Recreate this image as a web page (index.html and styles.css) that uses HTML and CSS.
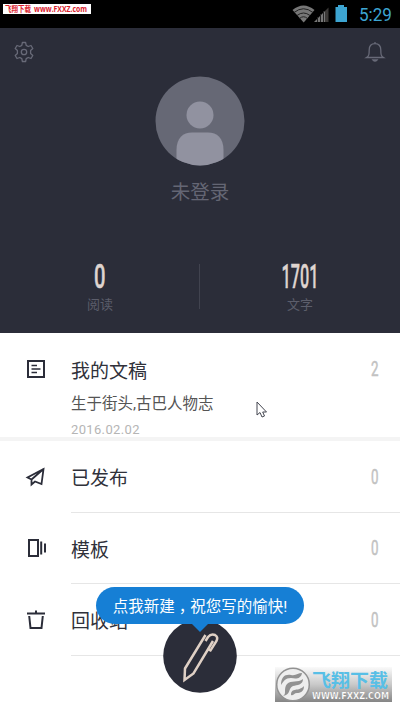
FILE: index.html
```html
<!DOCTYPE html>
<html lang="zh-CN">
<head>
<meta charset="utf-8">
<title>我的文稿</title>
<link rel="stylesheet" href="styles.css">
</head>
<body>
<div class="phone">
  <div class="status">
    <span class="site-tag"><svg width="84" height="12"><text x="0" y="9" textLength="26" lengthAdjust="spacingAndGlyphs">飞翔下载</text><text x="29" y="9" textLength="53" lengthAdjust="spacingAndGlyphs">www.FXXZ.com</text></svg></span>
    <div class="status-icons">
      <svg width="58" height="20" viewBox="292 4 58 20">
        <path d="M292.500 10Q303.500 1 314.500 10L303.700 22.500Z" fill="#777"/>
        <path d="M294 12.500Q303.500 5 313 12.500M297 15.500Q303.500 10.500 310 15.500M299.500 18.500Q303.500 15 307.500 18.500" fill="none" stroke="#222" stroke-width="1"/>
        <path d="M314 22L325 11V22Z" fill="#777"/><path d="M325 11L328.500 7.500V22H325Z" fill="#3c3a38"/>
        <path d="M317.500 17V22M320.500 14V22M323.500 11V22" stroke="#222" stroke-width="1"/>
        <path d="M335.500 7H338V5H344V7H347V22H335.500Z" fill="#3da5d2"/>
      </svg>
      <svg class="clock" width="36" height="22"><text x="1" y="16.500" textLength="33" lengthAdjust="spacingAndGlyphs">5:29</text></svg>
    </div>
  </div>
  <header class="profile">
    <div class="tools">
      <svg width="22" height="22" viewBox="0 0 22 22" fill="none" stroke="#686a78" stroke-width="1.300" stroke-linejoin="round">
        <path d="M9.400 1.500H12.600L13.200 4.400L15.200 5.500L18 4.500L19.800 7.500L17.600 9.500V12.500L19.800 14.500L18 17.500L15.200 16.500L13.200 17.600L12.600 20.500H9.400L8.800 17.600L6.800 16.500L4 17.500L2.200 14.500L4.400 12.500V9.500L2.200 7.500L4 4.500L6.800 5.500L8.800 4.400Z"/><circle cx="11" cy="11" r="2.700"/>
      </svg>
      <svg width="20" height="22" viewBox="0 0 20 22" fill="none" stroke="#686a78" stroke-width="1.300">
        <path d="M1.500 16.500C4 15 4.200 13.500 4.200 9C4.200 5 6.500 2.700 10 2.700S15.800 5 15.800 9C15.800 13.500 16 15 18.500 16.500ZM10 1V2.700M8 19Q10 21.200 12 19Z"/>
      </svg>
    </div>
    <svg class="avatar" width="90" height="90" viewBox="0 0 90 90">
      <defs><clipPath id="face"><circle cx="45" cy="45" r="44.500"/></clipPath></defs>
      <g clip-path="url(#face)"><path d="M0 0H90V90H0Z" fill="#666875"/><circle cx="45" cy="39" r="13.500" fill="#9192a0"/><path d="M21.500 92V74C21.500 62 28 56.500 37 56.500H53C62 56.500 68.500 62 68.500 74V92Z" fill="#9192a0"/></g>
    </svg>
    <div class="login">未登录</div>
    <div class="stats">
      <div class="stat"><svg width="60" height="38"><text x="24" y="25" textLength="11.500" lengthAdjust="spacingAndGlyphs">0</text></svg><span>阅读</span></div>
      <i class="divider"></i>
      <div class="stat"><svg width="60" height="38"><text x="11.500" y="25" textLength="37" lengthAdjust="spacingAndGlyphs">1701</text></svg><span>文字</span></div>
    </div>
  </header>
  <main>
    <section class="row drafts">
      <svg class="icon" width="22" height="22" viewBox="0 0 22 22" fill="none" stroke="#2b2d39" stroke-width="2"><path d="M3 3H19V19H3Z"/><path d="M6.500 7.500H12M6.500 11H15.500M6.500 14.500H12" stroke-width="1.500"/></svg>
      <div class="body"><h2>我的文稿</h2><p>生于街头,古巴人物志</p><time>2016.02.02</time></div>
      <svg class="count" width="10" height="24"><text x="1" y="18.500" textLength="7.500" lengthAdjust="spacingAndGlyphs">2</text></svg>
    </section>
    <section class="row">
      <svg class="icon" width="22" height="22" viewBox="0 0 22 22" fill="none" stroke="#2b2d39" stroke-width="1.800"><path d="M18.500 3L2.500 11.500L6.500 13.500V18.500L10 15.500L16.500 18ZM6.500 13.500L18.500 3"/></svg>
      <h2 class="body">已发布</h2>
      <svg class="count" width="10" height="24"><text x="1" y="18.500" textLength="7.500" lengthAdjust="spacingAndGlyphs">0</text></svg>
    </section>
    <section class="row">
      <svg class="icon" width="22" height="22" viewBox="0 0 22 22" fill="none" stroke="#2b2d39" stroke-width="2"><path d="M4 3H13V19H4ZM16.200 4.500V17.500M20 6.500V15.500"/></svg>
      <h2 class="body">模板</h2>
      <svg class="count" width="10" height="24"><text x="1" y="18.500" textLength="7.500" lengthAdjust="spacingAndGlyphs">0</text></svg>
    </section>
    <section class="row">
      <svg class="icon" width="22" height="22" viewBox="0 0 22 22" fill="none" stroke="#2b2d39" stroke-width="2"><path d="M2 4.500H20M11 1.500V4.500"/><path d="M4.200 7L5.500 19H16.500L17.800 7"/></svg>
      <h2 class="body">回收站</h2>
      <svg class="count" width="10" height="24"><text x="1" y="18.500" textLength="7.500" lengthAdjust="spacingAndGlyphs">0</text></svg>
    </section>
  </main>
  <svg class="fab" width="74" height="74" viewBox="0 0 74 74">
    <circle cx="37" cy="37" r="36.800" fill="#2b2d39"/>
    <g fill="none" stroke="#dfd0c5" stroke-width="2.500"><path d="M42.500 16L22 49.500L21.500 61L30.500 54.500L50 22"/><path d="M42.500 22L45 18Q48 14.500 52 16Q55.500 18 53.500 22L47.500 31.500L44.500 30"/></g>
  </svg>
  <div class="tip">点我新建<span class="comma" lang="zh-TW">，</span>祝您写的愉快!</div>
  <svg class="cursor" width="12" height="18" viewBox="0 0 12 18"><path d="M1 1V14L4 11.500L6 16L8.500 15L6.700 11H10.500Z" fill="#fff" stroke="#444650" stroke-width="1"/></svg>
  <div class="brand">
    <svg width="117" height="36" viewBox="0 0 117 36">
      <defs><linearGradient id="shade" x2="0" y2="1"><stop stop-color="#fafafa"/><stop offset=".5" stop-color="#c9c9c9"/><stop offset="1" stop-color="#858585"/></linearGradient></defs>
      <path d="M0 0H117V35H0Z" fill="url(#shade)"/>
      <circle cx="18" cy="17.500" r="16.300" fill="#eee" stroke="#929292" stroke-width="1.500"/>
      <path d="M6 18C6 10 10 7 16 8C21 9 23 6 27 6C26 12 21 12 16 11C10 11 9 14 6 18ZM8 29C12 27 8 22 12 17C16 13 23 16 28 12C28 18 22 18 18 19C13 21 16 28 8 29ZM16 28C16 20 24 25 29 19C29 25 25 26 22 26C19 26 19 29 16 28Z" fill="#929292"/>
      <text class="brand-name" x="37" y="20" textLength="76" lengthAdjust="spacingAndGlyphs">飞翔下载</text>
      <text class="brand-url" x="37" y="32" textLength="77" lengthAdjust="spacingAndGlyphs">WWW.FXXZ.COM</text>
    </svg>
  </div>
</div>
</body>
</html>
```
FILE: styles.css
```css
* { box-sizing: border-box; }
body { margin: 0; background: #fff; font-family: Roboto, "Noto Sans CJK SC", sans-serif; }
svg { display: block; flex: none; overflow: visible; }
h2, p { margin: 0; font-weight: 400; }
.phone { position: relative; width: 400px; height: 711px; overflow: hidden; }
.status { display: flex; justify-content: space-between; height: 28px; padding: 4px 6px 0 3px; background: #000; }
.site-tag { height: 10px; width: 88px; padding-left: 2px; background: #fff; }
.site-tag svg { margin-top: -1px; }
.site-tag text { font: 700 8px "Open Sans", "Noto Sans CJK SC", sans-serif; fill: #d9202c; }
.status-icons { display: flex; gap: 8px; }
.clock text { font-size: 18px; fill: #3da5d2; }
.profile { display: flex; flex-direction: column; align-items: center; height: 305px; background: #2b2d39; }
.tools { display: flex; justify-content: space-between; width: 100%; height: 48px; padding: 13px 15px 0 13px; }
.login { margin-top: 12px; height: 30px; font-size: 19.5px; line-height: 30px; color: #646674; }
.stats { display: flex; width: 100%; margin-top: 55px; }
.stat { display: flex; flex: 1; flex-direction: column; align-items: center; font-size: 13px; line-height: 20px; color: #5c5e6b; }
.stat text { font-size: 34px; font-weight: 500; fill: #dfd4cf; stroke: #dfd4cf; stroke-width: .5px; }
.stat span { margin-top: -6px; }
.divider { width: 1px; height: 45px; margin-top: 1px; margin-left: -1px; background: #41434f; }
.row { display: flex; align-items: center; height: 71.500px; padding: 0 20px 0 25px; }
.body { flex: 1; align-self: stretch; margin-left: 24px; }
.row h2 { font-size: 19px; line-height: 76px; color: #30313a; }
.row + .row { background: linear-gradient(#e6e6e6, #e6e6e6) 71px 100% / 329px 1px no-repeat; }
.count text { font-size: 20px; fill: #c2c2c2; stroke: #c2c2c2; stroke-width: .5px; }
.drafts { align-items: flex-start; height: 108px; border-bottom: 4px solid #f4f4f4; }
.drafts .icon { margin-top: 25px; }
.drafts .count { margin-top: 24px; }
.drafts h2 { margin-top: 25px; line-height: 28px; }
.drafts p { margin-top: 5px; font-size: 15.5px; line-height: 26px; color: #555; }
.drafts time { display: block; font-size: 13px; line-height: 25px; letter-spacing: .35px; color: #b5b5b5; }
.fab { position: absolute; left: 163px; top: 619px; }
.tip { position: absolute; left: 96px; top: 587px; width: 208px; height: 37px; border-radius: 19px; background: #167fd5; color: #fff; font-size: 15.5px; line-height: 40px; text-align: center; white-space: nowrap; }
.comma { font-family: "Noto Sans CJK TC", sans-serif; line-height: 1; vertical-align: -5px; }
.tip::after { content: ""; position: absolute; left: 95px; top: 36px; border: 9px solid transparent; border-top-color: #167fd5; border-bottom: 0; }
.cursor { position: absolute; left: 256px; top: 401px; }
.brand { position: absolute; left: 275px; top: 667px; }
.brand-name { font: 700 18.500px "Noto Sans CJK SC", sans-serif; fill: #58bfe6; }
.brand-url { font: 700 8.500px "DejaVu Sans", sans-serif; fill: #fff; stroke: #777; stroke-width: .2px; }
```
